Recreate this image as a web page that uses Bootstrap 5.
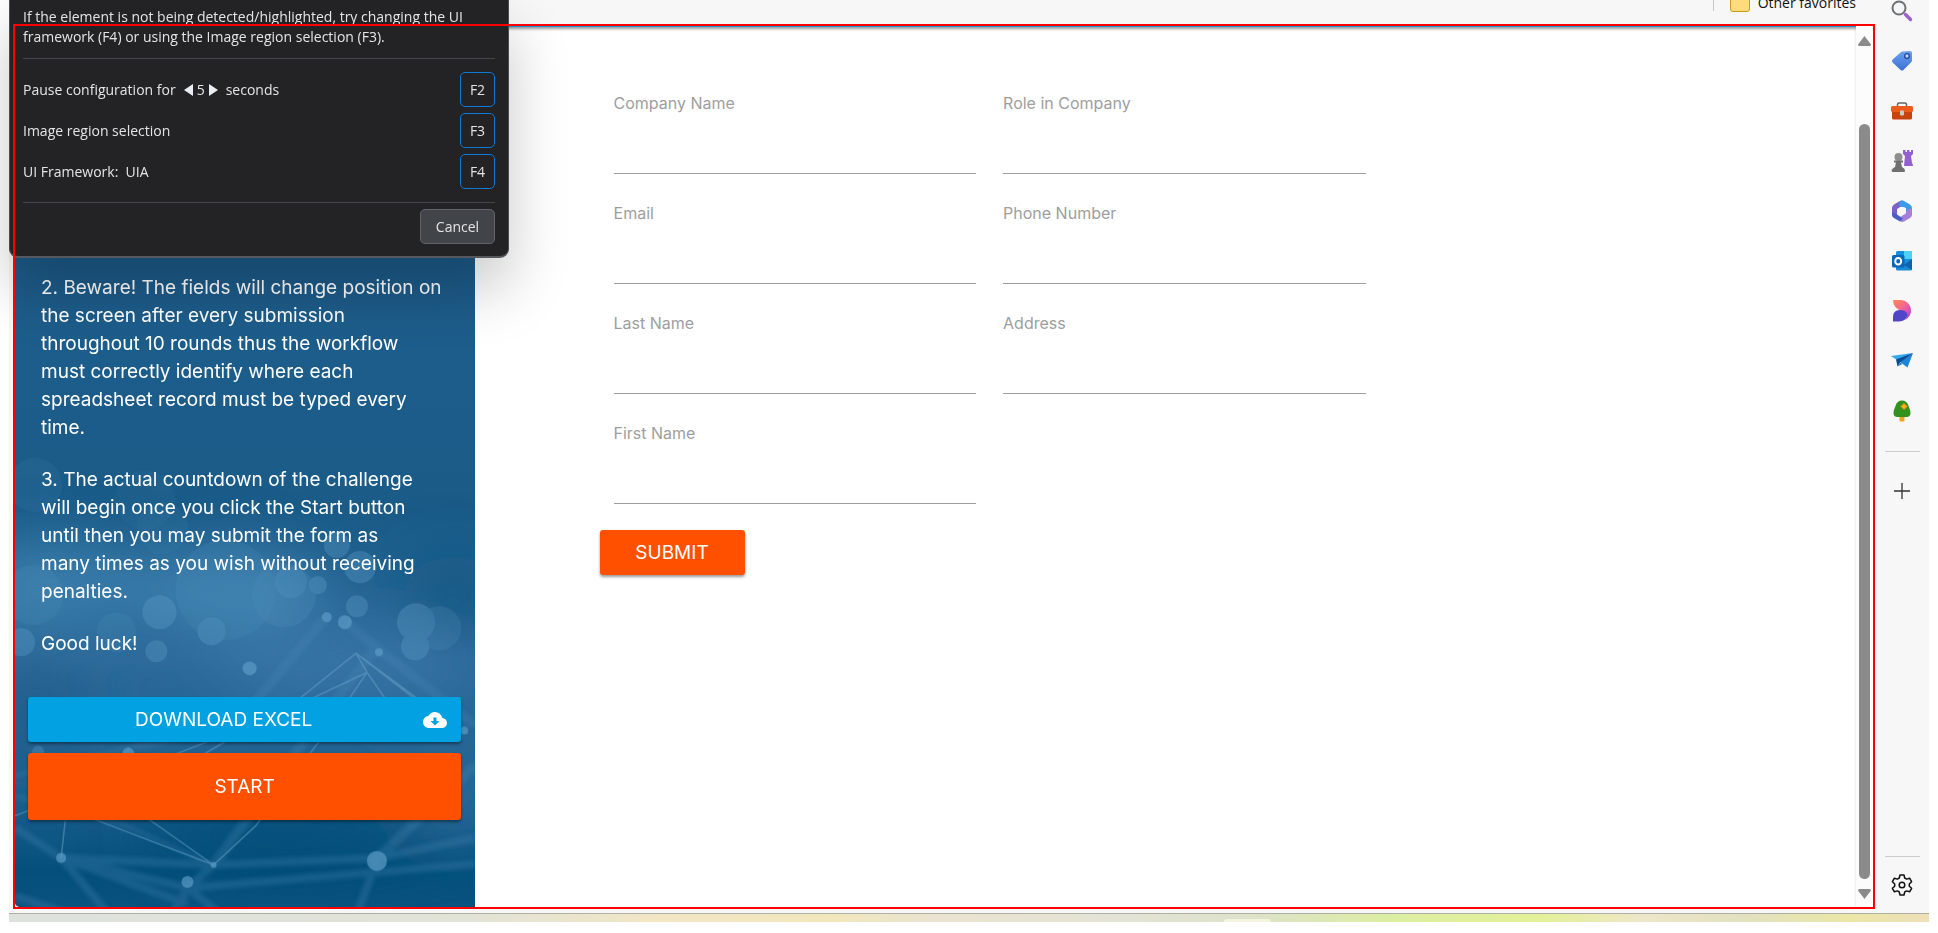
<!DOCTYPE html>
<html lang="en">
<head>
<meta charset="utf-8">
<meta name="viewport" content="width=device-width, initial-scale=1">
<title>RPA Challenge</title>
<link href="https://cdn.jsdelivr.net/npm/bootstrap@5.3.0/dist/css/bootstrap.min.css" rel="stylesheet">
<style>
  body { font-family: "Open Sans", sans-serif; font-size: 14px; line-height: 20px; color: #111; background: #fff; }
  .screen { padding: 0 9px 11px; }
  .chrome { background: #f7f7f7; }

  /* favourites strip */
  .favbar { height: 24px; padding-right: 19px; }
  .favbar a { color: #111; font-size: 14px; line-height: 14px; margin-top: -4px; }
  .favsep { width: 1px; height: 11px; background: #c8c8c8; }

  /* browser viewport and the highlight round it */
  .viewport { margin: 0 0 4px 4px; padding: 2px; background: #fff; }
  .viewport::after { content: ""; position: absolute; inset: 0; border: 2px solid #f00; z-index: 20; pointer-events: none; }
  .page { border-top: 1px solid #1d95d3; box-shadow: inset 0 3px 3px -1px rgba(0,0,0,.4); font-family: Inter, sans-serif; }
  .scroller { width: 17px; background: #fcfcfc; padding: 10px 3px 8px; border-radius: 0 8px 8px 0; }
  .thumb { width: 11px; background: #8b8b8b; border-radius: 6px; margin: 78px 0 10px; }

  /* instructions */
  .instructions { background: #1b5b88; padding: 0 14px 87px 13px; color: #fff; font-size: 19px; line-height: 28px; border-radius: 0 0 0 5px; overflow: hidden; }
  .backdrop-art { position: absolute; inset: 0; width: 100%; height: 100%; }
  .instructions p { margin: 0 14px 24px 13px; }
  .act { border: 0; border-radius: 3px; color: #fff; font-size: 19px; line-height: 27px; padding: 9px 14px; box-shadow: 0 2px 3px rgba(0,0,0,.4); }
  .act-blue { background: #02a2e2; margin-top: 39px; }
  .act-blue span { margin-right: 18px; }
  .act-orange { background: #ff5000; }
  .act-tall { padding: 20px 14px; margin-top: 11px; }

  /* form */
  .entry { margin-left: 9%; width: 56.5%; padding-top: 64px; }
  .fields { display: grid; grid-template-columns: 1fr 1fr; column-gap: 27px; row-gap: 27px; padding: 0 14px; margin-bottom: 26px; }
  .fields label { display: block; color: #9e9e9e; font-size: 16px; line-height: 24px; }
  .fields .form-control { height: 59px; padding: 0; border: 0; border-bottom: 1px solid #9e9e9e; border-radius: 0; }
  .submit { width: 145px; }

  /* selection dialog */
  .picker { position: absolute; top: 0; left: 0; width: 500px; z-index: 10; padding: 7px 13px 12px; background: #232325; color: #e4e4e4; border: 1px solid #4a4c50; border-top: 0; border-bottom: 2px solid #55585c; border-radius: 0 0 9px 9px; box-shadow: 0 30px 60px rgba(0,0,0,.22); }
  .picker hr { margin: 11px 0 13px; opacity: 1; border-top: 1px solid #46464a; }
  .picker .keys { gap: 6px; }
  .picker .keys + hr { margin: 13px 0 6px; }
  .picker .btn { height: 35px; padding: 0; font-size: 14px; color: #e4e4e4; border-radius: 5px; }
  .picker .key { width: 35px; border: 1px solid #0f78d4; }
  .picker .cancel { width: 75px; background: #414449; border: 1px solid #606368; }
  .step { background: none; border: 0; padding: 0; line-height: 0; }

  /* side rail */
  .rail { width: 54px; background: #f7f7f7; overflow: hidden; }
  .tools { margin: -14px 0 15px; }
  .tool { width: 54px; height: 50px; border: 0; background: none; padding: 0; }
  .rail-line { width: 35px; height: 1px; background: #ccc; }
  .rail-add { height: 76px; }
  .rail-gear { height: 56px; }

  .taskbar { height: 9px; border-top: 1px solid #aeb0a4; background: linear-gradient(90deg, #dde2dd 0%, #e2e3d7 24%, #f2e6c4 34%, #f0e7bc 43%, #ebe3cf 48%, #e3e3d6 58%, #dde2c8 65%, #dceea2 72%, #e4f19a 80%, #eee6c8 85%, #e2e1c0 90%, #ebe6a8 96%, #eee0b8 100%); }
  .taskbar i { width: 47px; height: 3px; margin-left: 63.3%; background: #f3f3df; border-radius: 4px 4px 0 0; }
</style>
</head>
<body>
<div class="screen vh-100 d-flex flex-column overflow-hidden">
  <div class="chrome flex-grow-1 d-flex position-relative">

    <section class="picker" aria-label="Element selection">
      <div>If the element is not being detected/highlighted, try changing the UI framework (F4) or using the Image region selection (F3).</div>
      <hr>
      <div class="d-flex flex-column keys">
        <div class="d-flex align-items-center justify-content-between">
          <span class="d-flex align-items-center">Pause configuration for
            <button class="step ms-2" aria-label="Fewer seconds"><svg width="9" height="12"><path d="M9 0v12L0 6z" fill="#e8eef2"/></svg></button>
            <span class="px-1">5</span>
            <button class="step me-2" aria-label="More seconds"><svg width="9" height="12"><path d="M0 0v12l9-6z" fill="#e8eef2"/></svg></button>
            seconds</span>
          <button class="btn key">F2</button>
        </div>
        <div class="d-flex align-items-center justify-content-between"><span>Image region selection</span><button class="btn key">F3</button></div>
        <div class="d-flex align-items-center justify-content-between"><span>UI Framework:&nbsp; UIA</span><button class="btn key">F4</button></div>
      </div>
      <hr>
      <div class="d-flex justify-content-end"><button class="btn cancel">Cancel</button></div>
    </section>

    <div class="flex-grow-1 d-flex flex-column">
      <div class="favbar d-flex justify-content-end align-items-start">
        <span class="favsep me-3"></span>
        <svg class="me-2" width="20" height="12" aria-hidden="true"><rect x=".5" y="-8" width="19" height="19.500" rx="2.500" fill="#fddd7b" stroke="#c79a1d"/></svg>
        <a href="#" class="text-decoration-none">Other favorites</a>
      </div>

      <div class="viewport flex-grow-1 position-relative d-flex">
        <main class="page flex-grow-1 d-flex">
          <aside class="instructions w-25 position-relative d-flex flex-column justify-content-end">
            <svg class="backdrop-art" viewBox="0 0 459 881" preserveAspectRatio="xMidYMax slice" aria-hidden="true">
              <defs>
                <linearGradient id="sea" x1="0" y1="0" x2="0" y2="1"><stop offset="0" stop-color="#1a5280"/><stop offset=".35" stop-color="#1d5d8b"/><stop offset=".55" stop-color="#1a5b88"/><stop offset=".72" stop-color="#2c6a9a"/><stop offset=".88" stop-color="#1c5f8d"/><stop offset=".96" stop-color="#034f7c"/><stop offset="1" stop-color="#0b527f"/></linearGradient>
                <filter id="soft" x="-50%" y="-50%" width="200%" height="200%"><feGaussianBlur stdDeviation="28"/></filter>
                <filter id="faint" x="-20%" y="-20%" width="140%" height="140%"><feGaussianBlur stdDeviation="2"/></filter>
              </defs>
              <rect width="459" height="881" fill="url(#sea)"/>
              <g filter="url(#soft)">
                <ellipse cx="40" cy="560" rx="90" ry="45" fill="#3f82b0" opacity=".8"/>
                <ellipse cx="210" cy="565" rx="100" ry="40" fill="#4a8cba" opacity=".7"/>
                <ellipse cx="330" cy="640" rx="130" ry="40" fill="#3b7cab" opacity=".6"/>
                <ellipse cx="440" cy="570" rx="50" ry="40" fill="#145681" opacity=".8"/>
                <ellipse cx="20" cy="690" rx="60" ry="60" fill="#1b5b89" opacity=".6"/>
                <ellipse cx="270" cy="810" rx="150" ry="40" fill="#004b78" opacity=".7"/>
                <ellipse cx="440" cy="770" rx="60" ry="50" fill="#2f6c9b" opacity=".6"/>
              </g>
              <g stroke="#4a86b3" fill="none" opacity=".3" filter="url(#faint)">
                <path d="M0 802 46 832 172 878M46 832 198 839 362 832 459 812M46 832 172 862 459 838M46 832 95 890M172 862 150 900M172 862 220 900M198 839 172 862M362 832 340 890M0 870 60 890" stroke-width="8"/>
                <path d="M330 598 459 700M362 621 300 700 198 839M310 592 220 700 120 720M362 832 459 740" stroke-width="10"/>
                <path d="M0 750 120 720M0 770 110 800 198 839" stroke-width="4"/>
              </g>
              <g stroke="#6ba3cb" fill="none" opacity=".5" stroke-width="1.500">
                <path d="M340 628 285 672 160 745M351 647 260 690 0 790M351 647 315 700 240 800 198 839M340 628 400 672M351 647 374 680M340 628 351 647M340 628 420 690M50 795 46 832M75 792 198 839M120 784 198 839"/>
              </g>
              <g fill="#61a0ca" opacity=".33">
                <circle cx="144" cy="587" r="17"/><circle cx="141" cy="626" r="11"/><circle cx="6" cy="617" r="14"/><circle cx="196" cy="606" r="14"/><circle cx="275" cy="557" r="16"/><circle cx="302" cy="560" r="9"/><circle cx="344" cy="542" r="16"/><circle cx="321" cy="520" r="13"/><circle cx="341" cy="581" r="11"/><circle cx="400" cy="597" r="19"/><circle cx="399" cy="621" r="14"/><circle cx="423" cy="603" r="22" opacity=".5"/><circle cx="101" cy="607" r="20" opacity=".4"/><circle cx="210" cy="565" r="50" opacity=".4"/><circle cx="268" cy="570" r="32" opacity=".5"/><circle cx="147" cy="503" r="26" opacity=".25"/><circle cx="20" cy="460" r="27" opacity=".3"/><circle cx="18" cy="570" r="30" opacity=".4"/><circle cx="130" cy="475" r="30" opacity=".2"/>
              </g>
              <g fill="#5c9bc6" opacity=".7">
                <circle cx="234" cy="643" r="7"/><circle cx="311" cy="592" r="5"/><circle cx="329" cy="597" r="7"/><circle cx="363" cy="627" r="4"/><circle cx="46" cy="832" r="5"/><circle cx="198" cy="839" r="3"/><circle cx="172" cy="856" r="6"/><circle cx="361" cy="835" r="10"/><circle cx="113" cy="728" r="6"/><circle cx="23" cy="726" r="6" opacity=".5"/><circle cx="448" cy="705" r="4"/>
              </g>
            </svg>
            <div class="position-relative">
              <p>2. Beware! The fields will change position on the screen after every submission throughout 10 rounds thus the workflow must correctly identify where each spreadsheet record must be typed every time.</p>
              <p>3. The actual countdown of the challenge will begin once you click the Start button until then you may submit the form as many&nbsp;times as you wish without receiving penalties.</p>
              <p>Good luck!</p>
              <button class="act act-blue w-100 d-flex align-items-center"><span class="flex-grow-1">DOWNLOAD EXCEL</span>
                <svg width="24" height="24" viewBox="0 0 24 24" aria-hidden="true"><path fill="#fff" d="M19.350 10.040A7.490 7.490 0 0 0 12 4C9.110 4 6.600 5.640 5.350 8.040A5.994 5.994 0 0 0 0 14c0 3.310 2.690 6 6 6h13c2.760 0 5-2.240 5-5 0-2.640-2.050-4.780-4.650-4.960z"/><path d="M10.500 9.500h3V13H16.500L12 17.500 7.500 13H10.500z" fill="#02a2e2"/></svg>
              </button>
              <button class="act act-orange act-tall w-100">START</button>
            </div>
          </aside>

          <div class="flex-grow-1">
            <form class="entry">
              <div class="fields">
                <div><label for="f1">Company Name</label><input id="f1" class="form-control"></div>
                <div><label for="f2">Role in Company</label><input id="f2" class="form-control"></div>
                <div><label for="f3">Email</label><input id="f3" class="form-control" type="email"></div>
                <div><label for="f4">Phone Number</label><input id="f4" class="form-control"></div>
                <div><label for="f5">Last Name</label><input id="f5" class="form-control"></div>
                <div><label for="f6">Address</label><input id="f6" class="form-control"></div>
                <div><label for="f7">First Name</label><input id="f7" class="form-control"></div>
              </div>
              <button type="button" class="act act-orange submit">SUBMIT</button>
            </form>
          </div>
        </main>
        <div class="scroller flex-shrink-0 d-flex flex-column align-items-center" aria-hidden="true">
          <svg width="13" height="10"><path d="M6.500 0 13 8.500Q13 10 11.500 10H1.500Q0 10 0 8.500z" fill="#8b8b8b"/></svg>
          <div class="thumb flex-grow-1"></div>
          <svg width="13" height="10"><path d="M6.500 10 13 1.500Q13 0 11.500 0H1.500Q0 0 0 1.500z" fill="#8b8b8b"/></svg>
        </div>
      </div>
    </div>

    <nav class="rail flex-shrink-0 d-flex flex-column align-items-center" aria-label="Sidebar">
      <div class="tools">
        <button class="tool" aria-label="Search"><svg width="22" height="22" viewBox="0 0 22 22"><path d="M14.500 14.500 19.500 19.500" stroke="#9a63cf" stroke-width="3.500" stroke-linecap="round"/><circle cx="8" cy="8" r="6.500" fill="#f4f6f8" stroke="#707070" stroke-width="2"/></svg></button>
        <button class="tool" aria-label="Shopping"><svg width="22" height="22" viewBox="0 0 22 22"><defs><linearGradient id="g1" x1="0" y1="0" x2="0" y2="1"><stop stop-color="#6aa3ee"/><stop offset="1" stop-color="#3d6fd8"/></linearGradient></defs><path d="M11.500 1.500 19 1a2 2 0 0 1 2 2v7.500a2 2 0 0 1-.6 1.400l-8 8a2 2 0 0 1-2.800 0l-8-7.500a2 2 0 0 1 0-2.800l8.500-7.500a2 2 0 0 1 1.400-.6z" fill="url(#g1)"/><circle cx="16" cy="6" r="2.300" fill="#bfd9ff" stroke="#1f3f96" stroke-width="1.300"/></svg></button>
        <button class="tool" aria-label="Tools"><svg width="22" height="22" viewBox="0 0 22 22"><path d="M6.500 7V4.500Q6.500 3 8 3h6q1.500 0 1.500 1.500V7" fill="none" stroke="#666" stroke-width="1.500"/><rect x="1" y="10" width="20" height="9.500" rx="1.500" fill="#c9430f"/><rect y="6" width="22" height="6" rx="1.500" fill="#ec5a1c"/><rect x="9" y="10.500" width="4" height="5" rx="1" fill="#ccc"/></svg></button>
        <button class="tool" aria-label="Games"><svg width="22" height="22" viewBox="0 0 22 22"><path d="M12 0h2.500v2H16V0h2.500v2H20V0h2v4l-2 2 1 7q1 1 1 3h-9l1-10-2-2z" fill="#9460d0"/><circle cx="7.500" cy="7" r="4" fill="#8f8f8f"/><path d="M3 10.500h9v2h-2l1 4.500q3 1.500 3 3.500t-2 1.500H2.500Q.5 22 .5 20.500T4 17l1-4.500H3z" fill="#707070"/></svg></button>
        <button class="tool" aria-label="Microsoft 365"><svg width="22" height="22" viewBox="0 0 22 22"><path d="M8 1.500 3 4.500Q1 6 1 8v6l5 2V9l7-4-3-4z" fill="#7a62c9"/><path d="M9 1Q11-.3 13 1l6 3.500Q21 6 21 8v6l-6-3V8L8 6z" fill="#3c9be8"/><path d="M21 8v7q0 1.500-2 3l-6 3.500q-2 1-4-.5l-1-3 7-5V11z" fill="#a67fd8"/><path d="M1 12v3q0 2 2 3l6 3.500 3-3-6-4z" fill="#4b5ec4"/><circle cx="11" cy="11" r="4" fill="#f7f7f7"/></svg></button>
        <button class="tool" aria-label="Outlook"><svg width="22" height="22" viewBox="0 0 22 22"><rect x="5" y="1" width="16" height="14" rx="1.500" fill="#1490df"/><path d="M13 1h8v8h-8z" fill="#50d0f5"/><path d="M5 12h16v7q0 1.500-1.500 1.500h-13Q5 20.500 5 19z" fill="#1a8ad6"/><path d="M13 15 21 9v11z" fill="#0f62ad"/><rect x="1" y="5" width="12.500" height="12.500" rx="1.500" fill="#0a67b8"/><ellipse cx="7.200" cy="11.200" rx="3" ry="3.300" fill="none" stroke="#fff" stroke-width="2"/></svg></button>
        <button class="tool" aria-label="Designer"><svg width="22" height="22" viewBox="0 0 22 22"><defs><linearGradient id="g2" x1="0" y1="0" x2="1" y2="1"><stop stop-color="#ff8a4a"/><stop offset=".5" stop-color="#f5629a"/><stop offset="1" stop-color="#a43ae8"/></linearGradient></defs><path d="M2 0h8a10.500 10.500 0 0 1 4 20Q20 13 12 11 2 9 2 0z" fill="url(#g2)"/><path d="M2 21.500V17q0-7 7-7 6.500 0 8 5-2.500 6.500-9 6.500z" fill="#5145c8"/></svg></button>
        <button class="tool" aria-label="Drop"><svg width="22" height="22" viewBox="0 0 22 22"><path d="M0 6 22 3 9 12z" fill="#35a7ee"/><path d="M22 3 16.500 17.500 9 12z" fill="#1b84dc"/><path d="M5 9.500 22 3 9 12.500 6.500 16.500z" fill="#0b4b94"/><path d="M9 12.500 6.500 16.500 11.500 14z" fill="#2380cf"/></svg></button>
        <button class="tool" aria-label="Browser essentials"><svg width="22" height="22" viewBox="0 0 22 22"><path d="M8.500 15h5v5.500q0 1-1 1h-3q-1 0-1-1z" fill="#f2a51c"/><path d="M11 .5Q16 .5 17.500 6 19.500 10 19.500 13q0 4-4 4h-9q-4 0-4-4 0-3 2-7Q6 .5 11 .5z" fill="#33921d"/><path d="M13 3.500 16 6.500 13 9.500 10 6.500z" fill="#f7b51c" stroke="#f28c13"/></svg></button>
      </div>
      <div class="rail-line"></div>
      <button class="tool rail-add" aria-label="Customize"><svg width="16" height="16"><path d="M8 0v16M0 8h16" stroke="#333" stroke-width="1.300"/></svg></button>
      <div class="rail-line mt-auto"></div>
      <button class="tool rail-gear" aria-label="Settings"><svg width="24" height="24" viewBox="0 0 24 24" fill="none" stroke="#111" stroke-width="1.500" stroke-linejoin="round"><path d="M10 2h4l.7 3 1.900 1.100 3-.9 2 3.500L19.300 11v2.200l2.300 2.100-2 3.500-3-.9-1.900 1.100-.7 3h-4l-.7-3-1.900-1.100-3 .9-2-3.500 2.300-2.100V11L2.400 8.700l2-3.500 3 .9L9.300 5z"/><circle cx="12" cy="12" r="2.800"/></svg></button>
    </nav>
  </div>
  <footer class="taskbar d-flex align-items-end"><i></i></footer>
</div>
<script src="https://cdn.jsdelivr.net/npm/bootstrap@5.3.0/dist/js/bootstrap.bundle.min.js"></script>
</body>
</html>
